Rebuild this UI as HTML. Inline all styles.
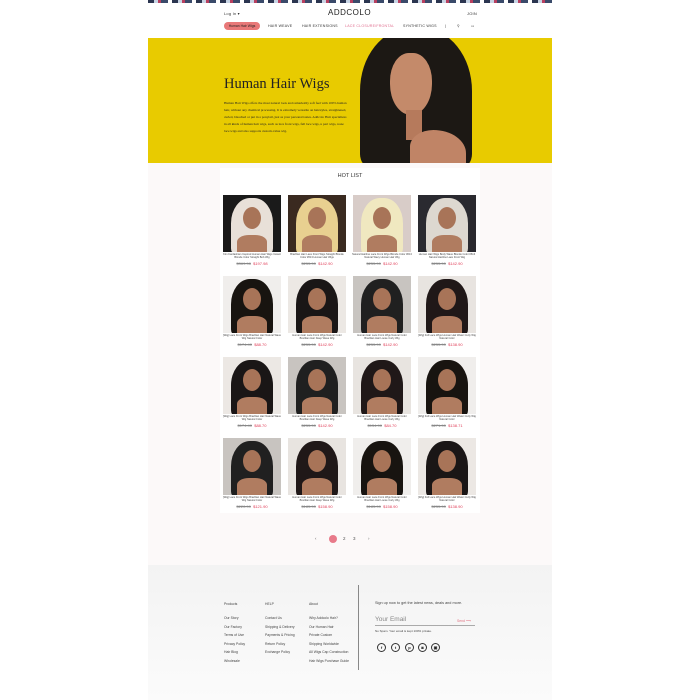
<!DOCTYPE html>
<html><head><meta charset="utf-8"><style>
*{margin:0;padding:0;box-sizing:border-box}
body{width:700px;height:700px;background:#fff;font-family:"Liberation Sans",sans-serif;position:relative;overflow:hidden}
.abs{position:absolute}
.top{left:148px;top:0;width:404px;height:3px;background:repeating-linear-gradient(90deg,#2b3550 0 6px,#c8d4e4 6px 10px,#b84060 10px 13px,#3a4a6a 13px 20px,#fff 20px 24px)}
.nav{font-size:3.6px;color:#333;letter-spacing:.2px;top:24px}
.hero{left:148px;top:38px;width:404px;height:125px;background:#e8cb00;overflow:hidden}
.mid{left:148px;top:163px;width:404px;height:402px;background:#fcf9f9}
.panel{left:220px;top:168px;width:260px;height:345px;background:#fff}
.img{position:absolute;width:58px;height:57px;overflow:hidden}
.cap{position:absolute;width:60px;font-size:2.6px;color:#444;text-align:center;line-height:3px}
.pr{position:absolute;width:60px;font-size:4px;text-align:center}
.pr s{color:#888}.pr b{color:#e0405a;font-weight:normal}
.foot{left:148px;top:565px;width:404px;height:135px;background:linear-gradient(#f3f3f3,#fbfbfb)}
.fl{font-size:3.4px;color:#444;position:absolute}
.ic{position:absolute;top:643px;width:9px;height:9px;border:1px solid #333;border-radius:50%;font-size:4px;text-align:center;line-height:7px;color:#222;font-weight:bold}
</style></head><body>
<div class="abs top"></div>
<div class="abs nav" style="left:224px;top:11px;font-size:4px">Log In ▾</div>
<div class="abs" style="left:328px;top:8px;font-size:8px;letter-spacing:.5px;color:#222">ADDCOLO</div>
<div class="abs nav" style="left:467px;top:11px;font-size:4px">JOIN</div>
<div class="abs" style="left:224px;top:22px;width:36px;height:8px;background:#e87878;border-radius:4px;font-size:3.4px;color:#222;text-align:center;line-height:8px">Human Hair Wigs</div>
<div class="abs nav" style="left:268px">HAIR WEAVE</div>
<div class="abs nav" style="left:302px">HAIR EXTENSIONS</div>
<div class="abs nav" style="left:345px;color:#e07090">LACE CLOSURE/FRONTAL</div>
<div class="abs nav" style="left:403px">SYNTHETIC WIGS</div>
<div class="abs nav" style="left:445px">|</div>
<div class="abs nav" style="left:457px">⚲</div>
<div class="abs nav" style="left:471px">▭</div>
<div class="abs hero">
 <div class="abs" style="left:76px;top:38px;font-family:'Liberation Serif',serif;font-size:14.5px;color:#222">Human Hair Wigs</div>
 <div class="abs" style="left:76px;top:62px;width:125px;font-family:'Liberation Serif',serif;font-size:3.4px;line-height:7px;color:#222">Human Hair Wigs offers the most natural look and remarkably soft feel with 100% human hair, without any chemical processing. It is extremely versatile on hairstyles, straightened, curled, bleached or put in a ponytail, just as your personal tastes. Addcolo Hair specializes in all kinds of human hair wigs, such as lace front wigs, full lace wigs, u part wigs, none lace wigs and also supports custom-value wig.</div>
 <div class="abs" style="left:212px;top:-10px;width:112px;height:140px;background:#1c1814;border-radius:45% 45% 10% 10%"></div>
 <div class="abs" style="left:242px;top:15px;width:42px;height:62px;background:#c48a6a;border-radius:45% 45% 50% 50%"></div>
 <div class="abs" style="left:258px;top:72px;width:16px;height:30px;background:#b67a5c"></div>
 <div class="abs" style="left:262px;top:92px;width:56px;height:40px;background:#c08466;border-radius:50% 70% 0 0"></div>
</div>
<div class="abs mid"></div>
<div class="abs panel"></div>
<div class="abs" style="left:220px;top:173px;width:260px;text-align:center;font-size:5.5px;color:#333">HOT LIST</div>
<div id="g"></div>
<div class="abs" style="left:315px;top:536px;font-size:4.5px;color:#555">‹</div>
<div class="abs" style="left:329px;top:535px;width:8px;height:8px;border-radius:50%;background:#e87a8a"></div>
<div class="abs" style="left:343px;top:536px;font-size:4.5px;color:#555">2</div>
<div class="abs" style="left:353px;top:536px;font-size:4.5px;color:#555">3</div>
<div class="abs" style="left:368px;top:536px;font-size:4.5px;color:#555">›</div>
<div class="abs foot"></div>
<div class="abs" style="left:358px;top:585px;width:1px;height:85px;background:#888"></div>
<div class="fl" style="left:224px;top:602px">Products</div>
<div class="fl" style="left:265px;top:602px">HELP</div>
<div class="fl" style="left:309px;top:602px">About</div>
<div class="fl" style="left:224px;top:614px;line-height:8.5px">Our Story<br>Our Factory<br>Terms of Use<br>Privacy Policy<br>Hair Blog<br>Wholesale</div>
<div class="fl" style="left:265px;top:614px;line-height:8.5px">Contact Us<br>Shipping &amp; Delivery<br>Payments &amp; Pricing<br>Return Policy<br>Exchange Policy</div>
<div class="fl" style="left:309px;top:614px;line-height:8.5px">Why Addcolo Hair?<br>Our Human Hair<br>Private Custom<br>Shipping Worldwide<br>All Wigs Cap Construction<br>Hair Wigs Purchase Guide</div>
<div class="fl" style="left:375px;top:601px;font-size:3.8px">Sign up now to get the latest news, deals and more.</div>
<div class="fl" style="left:375px;top:616px;font-size:6.5px;color:#888">Your Email</div>
<div class="fl" style="left:457px;top:619px;color:#e07080">Send ⟶</div>
<div class="abs" style="left:375px;top:625px;width:100px;height:1px;background:#aaa"></div>
<div class="fl" style="left:375px;top:629px;font-size:3px">No Spam. Your email is kept 100% private.</div>
<div class="ic" style="left:377px">f</div><div class="ic" style="left:391px">t</div><div class="ic" style="left:405px">p</div><div class="ic" style="left:418px">◙</div><div class="ic" style="left:431px">▣</div>
<script>
var xs=[223,288,353,418],ys=[195,276,357,438],h='';
var cols=[['#e8e0d8','#1a1a1a'],['#e8d090','#3a2a20'],['#f0e8c0','#d8ccc8'],['#ddd8d0','#2a2a30'],
['#201818','#e8e4e0'],['#181410','#f0eeec'],['#1a1616','#ece8e4'],['#202020','#c8c4c0']];
var caps=['Kim Kardashian Inspired Human Hair Wigs Instant Blonde Color Straight Bob Wig','Brazilian Hair Lace Front Wigs Straight Blonde Color #613 Human Hair Wigs','Natural Hairline Lace Front Wigs Blonde Color #613 Natural Wavy Human Hair Wig','Human Hair Wigs Body Wave Blonde Color #613 Natural Hairline Lace Front Wig','[Wig] Lace Front Wigs Brazilian Hair Natural Wave Wig Natural Color','Human Hair Lace Front Wigs Natural Color Brazilian Hair Deep Wave Wig','Human Hair Lace Front Wigs Natural Color Brazilian Hair Loose Curly Wig','[Wig] Full Lace Wigs Human Hair Water Curly Wig Natural Color'];
var pr=[['$369.98','$197.98'],['$255.90','$142.90'],['$255.90','$142.90'],['$255.90','$142.90'],['$174.40','$88.70'],['$255.90','$142.90'],['$255.90','$142.90'],['$255.90','$138.90'],['$174.40','$88.70'],['$255.90','$142.90'],['$154.90','$84.70'],['$271.90','$138.71'],['$220.90','$121.90'],['$185.90','$158.90'],['$185.90','$158.90'],['$255.90','$138.90']];
for(var r=0;r<4;r++)for(var c=0;c<4;c++){var i=r*4+c,k=r==0?c:4+((c+r)%4),cl=cols[k];
var x=xs[c],y=ys[r];
h+='<div class="img" style="left:'+x+'px;top:'+y+'px;background:'+cl[1]+'"><div style="position:absolute;left:8px;top:3px;width:42px;height:56px;background:'+cl[0]+';border-radius:45% 45% 10% 10%"></div><div style="position:absolute;left:20px;top:12px;width:18px;height:22px;background:#a87458;border-radius:50%"></div><div style="position:absolute;left:14px;top:40px;width:30px;height:17px;background:#b07c60;border-radius:40% 40% 0 0"></div></div>';
h+='<div class="cap" style="left:'+(x-1)+'px;top:'+(y+58)+'px">'+caps[(r<1?c:4+c)]+'</div>';
h+='<div class="pr" style="left:'+(x-1)+'px;top:'+(y+66)+'px"><s>'+pr[i][0]+'</s>&nbsp; <b>'+pr[i][1]+'</b></div>';}
document.getElementById('g').innerHTML=h;
</script>
</body></html>
